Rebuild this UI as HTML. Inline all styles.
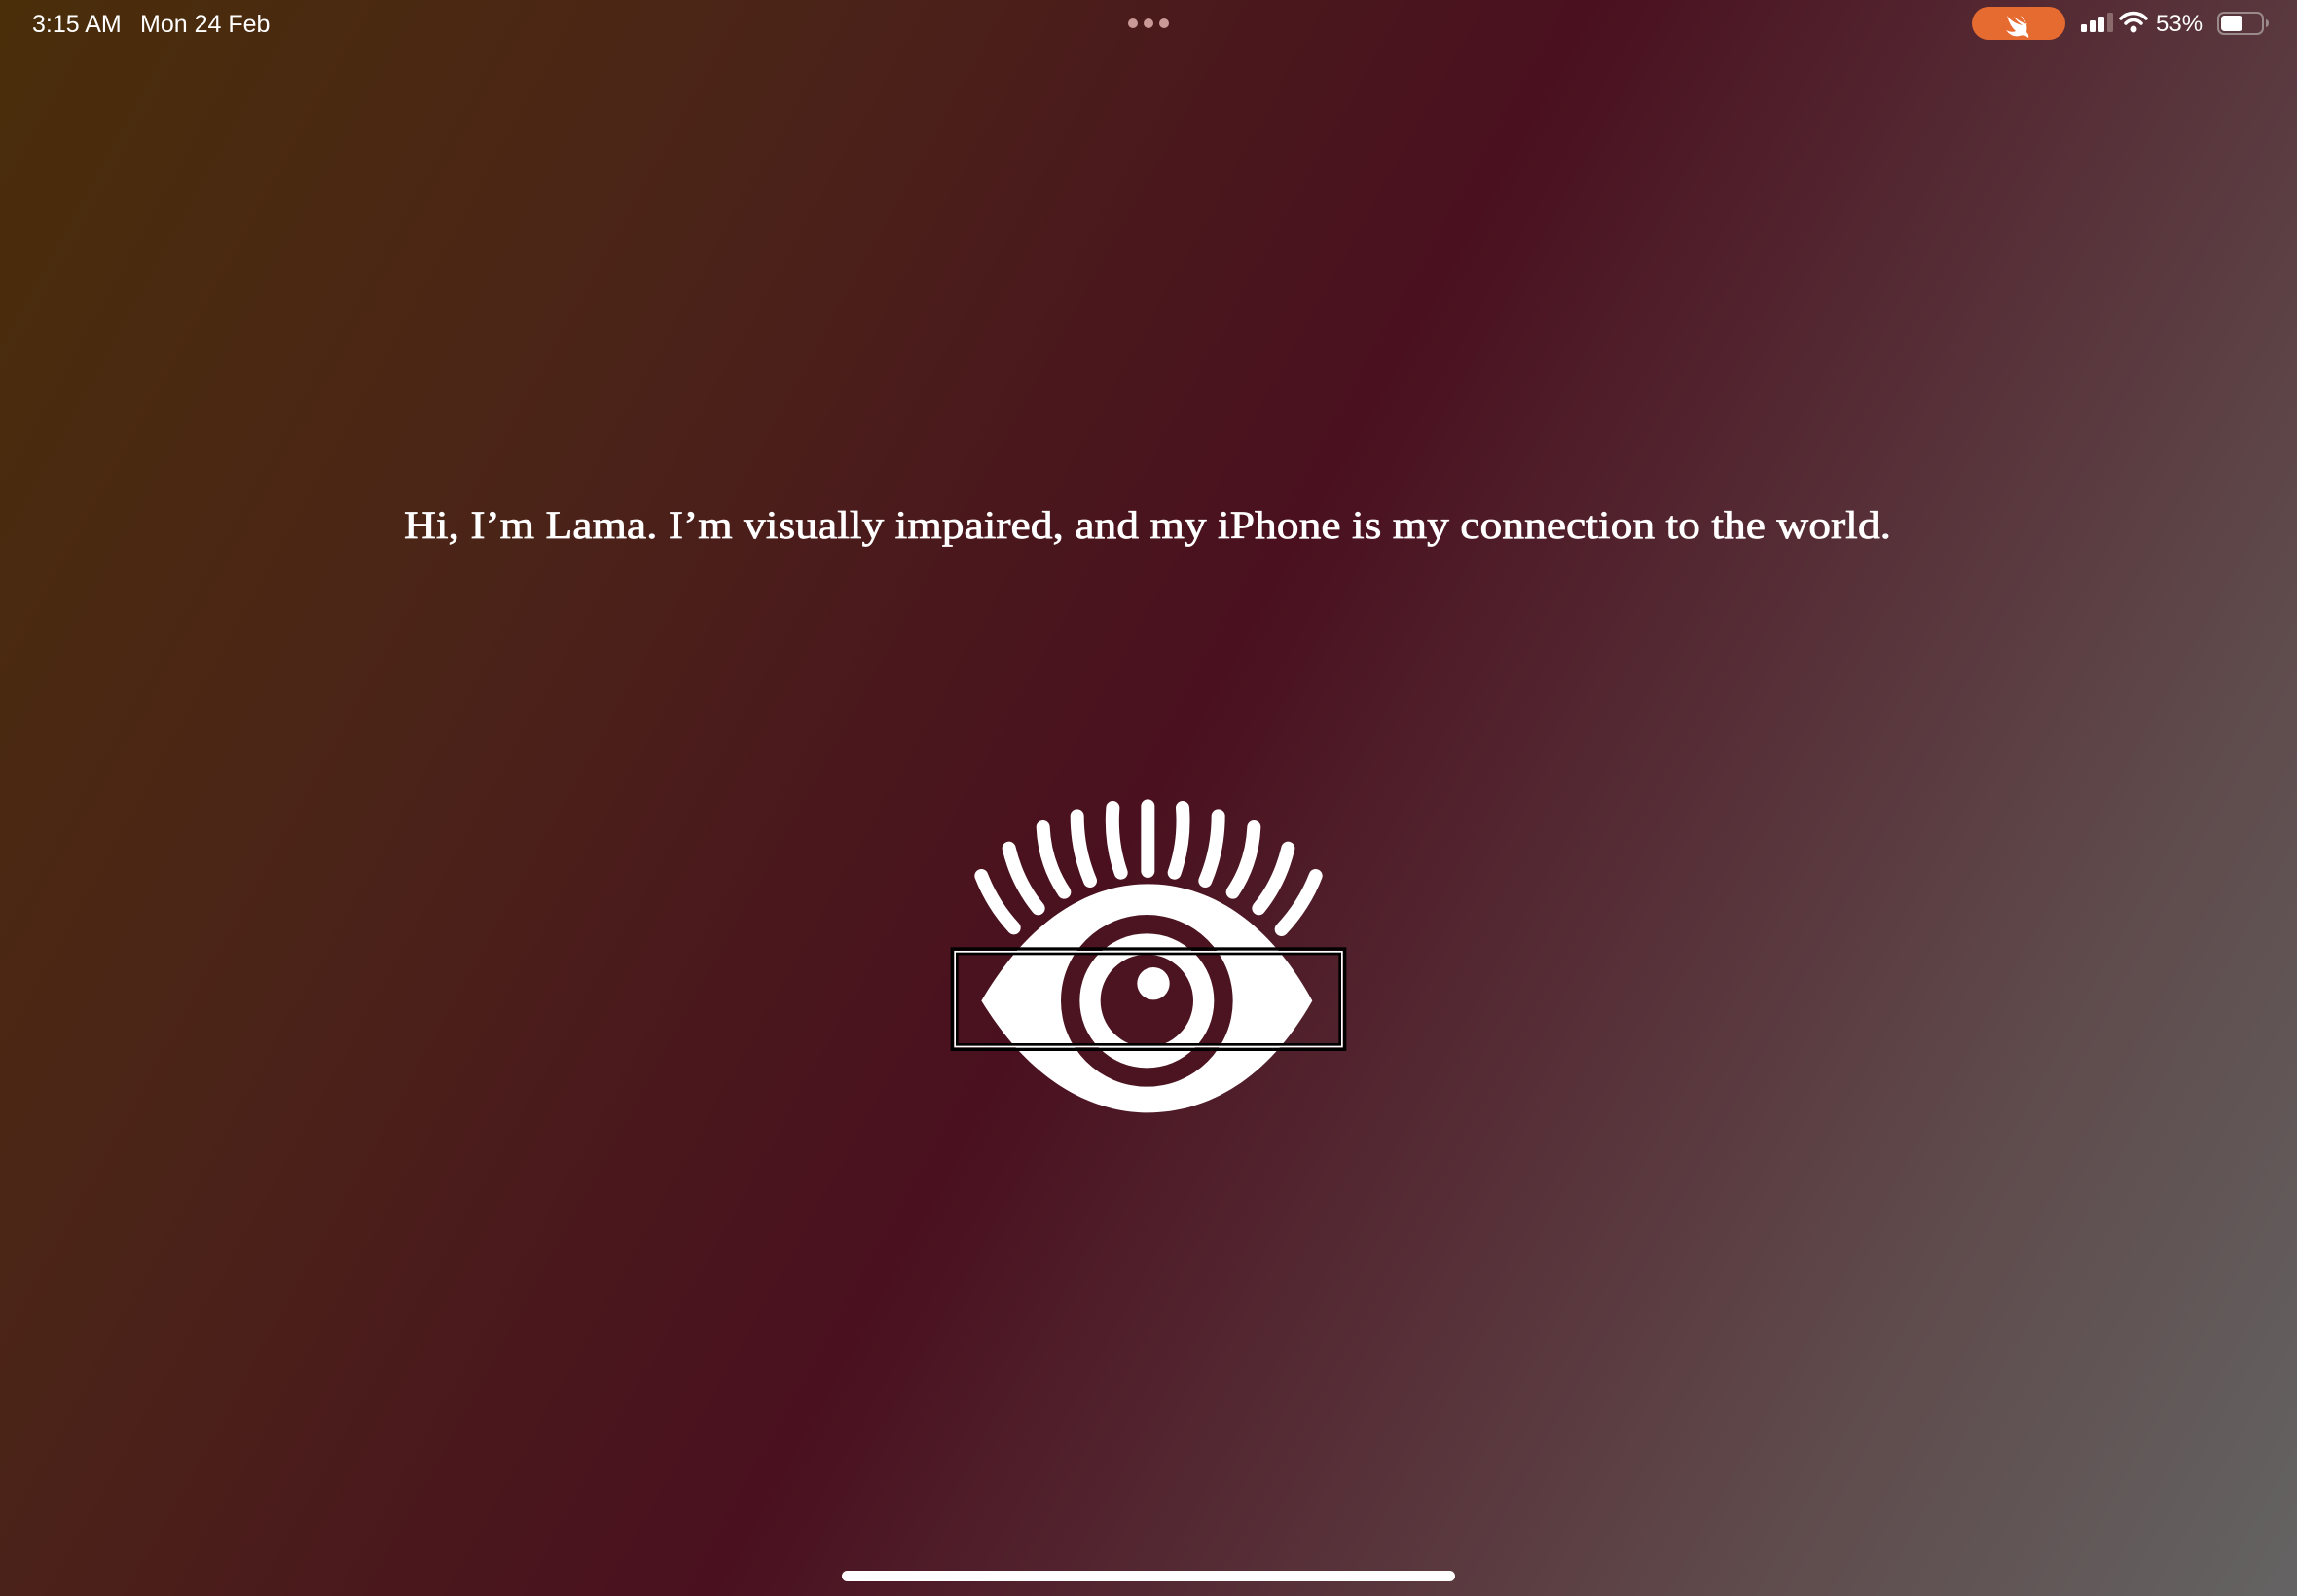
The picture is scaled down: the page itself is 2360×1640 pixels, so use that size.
<!DOCTYPE html>
<html><head><meta charset="utf-8"><style>
html,body{margin:0;padding:0}
body{width:2360px;height:1640px;position:relative;overflow:hidden;
background:linear-gradient(119deg,#4a2e0a 0%,#4b2418 25%,#4a101f 50%,#573038 68%,#5f4a4b 82%,#646363 100%);
font-family:"Liberation Sans",sans-serif;color:#fff}
.st{position:absolute;top:11px;font-size:25px;color:#fff}
</style></head><body>
<div class="st" style="left:33px">3:15 AM</div>
<div class="st" style="left:144px">Mon 24 Feb</div>
<svg style="position:absolute;left:0;top:0" width="2360" height="60">
<circle cx="1164" cy="24" r="5" fill="#c99a98"/><circle cx="1180" cy="24" r="5" fill="#c99a98"/><circle cx="1196" cy="24" r="5" fill="#c99a98"/>
<rect x="2026" y="7" width="96" height="34" rx="17" fill="#e66b30"/>
<path d="M2062 16 q6 8 16 10 q-6 -4 -9 -9 q7 6 14 8 q-5 -5 -7 -9 q8 6 6 17 q3 3 2 6 q-4 -4 -9 -2 q-8 2 -14 -6 q6 3 10 1 q-6 -5 -9 -16z" fill="#fff"/>
<rect x="2138" y="25" width="6" height="8" rx="1.5" fill="#fff"/>
<rect x="2147" y="21" width="6" height="12" rx="1.5" fill="#fff"/>
<rect x="2156" y="17" width="6" height="16" rx="1.5" fill="#fff"/>
<rect x="2165" y="13" width="6" height="20" rx="1.5" fill="#8a6a6c"/>
<path d="M2179 19 a18 18 0 0 1 26 0" stroke="#fff" stroke-width="3.5" fill="none" stroke-linecap="round"/>
<path d="M2184 24 a11 11 0 0 1 16 0" stroke="#fff" stroke-width="3.5" fill="none" stroke-linecap="round"/>
<circle cx="2192" cy="30" r="3.5" fill="#fff"/>
<text x="2215" y="32" font-size="24" fill="#fff" font-family="Liberation Sans">53%</text>
<rect x="2279" y="13" width="46" height="22" rx="6" fill="none" stroke="#9b8a8a" stroke-width="2"/>
<rect x="2282" y="16" width="22" height="16" rx="3.5" fill="#fff"/>
<path d="M2328 20 v8 a3 4 0 0 0 0 -8z" fill="#9b8a8a"/>
</svg>
<svg style="position:absolute;left:0;top:500px" width="2360" height="80">
<text x="415" y="53" font-size="40" fill="#fff" stroke="#fff" stroke-width="0.7" font-family="Liberation Serif" textLength="1528" lengthAdjust="spacingAndGlyphs">Hi, I’m Lama. I’m visually impaired, and my iPhone is my connection to the world.</text>
</svg>
<svg style="position:absolute;left:950px;top:800px" width="460" height="360" viewBox="0 0 1380 1080">
<g stroke="#fff" stroke-width="42" stroke-linecap="round" fill="none">
<path d="M175 300 Q210 390 275 460"/>
<path d="M260 215 Q285 320 350 400"/>
<path d="M365 150 Q370 260 430 350"/>
<path d="M470 115 Q470 220 510 315"/>
<path d="M580 90 Q572 195 605 290"/>
<path d="M688 85 L688 285"/>
<path d="M795 90 Q803 195 770 290"/>
<path d="M905 115 Q905 220 865 315"/>
<path d="M1015 150 Q1010 260 950 350"/>
<path d="M1120 215 Q1095 320 1030 400"/>
<path d="M1205 300 Q1170 390 1100 465"/>
</g>
<path d="M175 685 C330 420 520 325 688 325 C860 325 1050 420 1195 685 C1050 940 860 1030 688 1030 C520 1030 330 940 175 685Z" fill="#fff"/>
<circle cx="685" cy="685" r="265" fill="#4b1420"/>
<circle cx="685" cy="685" r="207" fill="#fff"/>
<circle cx="685" cy="685" r="143" fill="#4b1420"/>
<circle cx="705" cy="632" r="50" fill="#fff"/>
<rect x="85" y="525" width="1210" height="310" fill="none" stroke="#000" stroke-width="10"/>
<rect x="95" y="535" width="1190" height="290" fill="none" stroke="#fff" stroke-width="8"/>
<rect x="100" y="540" width="1180" height="280" fill="none" stroke="#000" stroke-width="8"/>
</svg>
<div style="position:absolute;left:865px;top:1614px;width:630px;height:11px;border-radius:6px;background:#fff"></div>
</body></html>
